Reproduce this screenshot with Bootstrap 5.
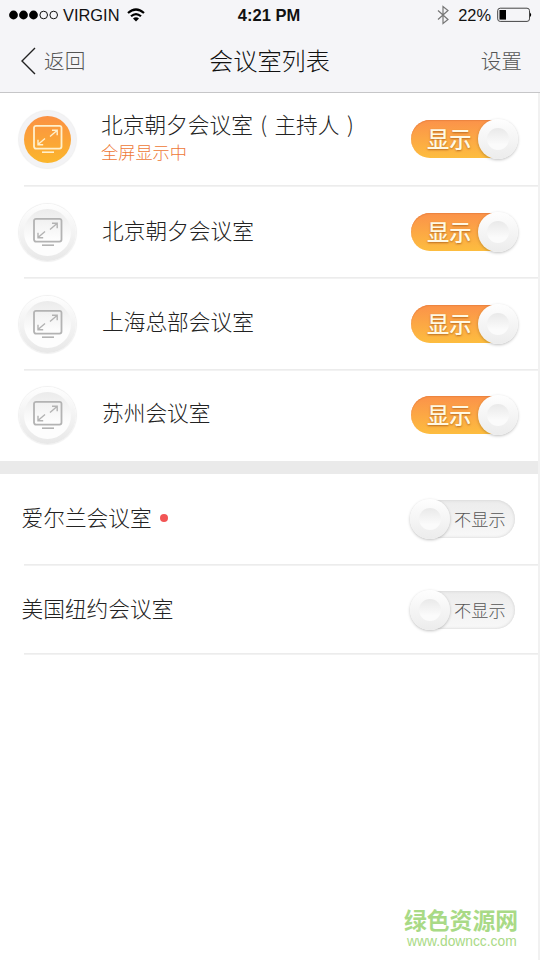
<!DOCTYPE html>
<html lang="zh-CN">
<head>
<meta charset="utf-8">
<meta name="viewport" content="width=device-width, initial-scale=1">
<title>会议室列表</title>
<link href="https://cdn.jsdelivr.net/npm/bootstrap@5.3.0/dist/css/bootstrap.min.css" rel="stylesheet">
<style>
body{font-family:"Noto Sans CJK SC",sans-serif;font-weight:300;color:#222;background:#fff;height:960px;overflow:hidden}
.screen{height:960px}
.top-area{height:93px;background:#f5f5f8;border-bottom:1px solid #c6c6c8}
.status-row{height:30px;font-family:"Liberation Sans",Arial,sans-serif;font-weight:400;font-size:16.4px;line-height:30px;color:#111;padding:0 8px}
.status-row .clock{font-weight:700;font-size:16.5px;margin-right:3px}
.status-row .power{margin-right:-1px}
.status-row>div,.title-row>div{flex:1 1 0}
.title-row{height:61px;line-height:60px;padding:0 18px 0 20px;font-size:20.7px;color:#555}
.title-row h1{font-size:24.2px;font-weight:300;line-height:58px;color:#111;padding:0 3px 2px 0}
.title-row .label{padding-bottom:2px}
.title-row .back-label{padding-left:7px}
.body-area{border-right:2px solid #f1f1f1}
.room{height:90px;padding-left:19px;padding-right:20px}
.room.first{height:92px}
.room.last{height:87px}
.room.raised{padding-bottom:2px}
.rule{height:2px;margin-left:24px;background:linear-gradient(#e9e9e9,#f5f5f5)}
.room-name{font-size:21.7px;line-height:28px;white-space:nowrap;padding-bottom:4px}
.room-name.tall{padding-bottom:6px}
.paren{display:inline-block;width:21.6px;text-align:center}
.with-note .room-name{line-height:27px;padding-bottom:2px;margin-top:-3px}
.room-note{font-size:17.2px;line-height:26px;color:#ee7836}
.band{height:13px;background:#eaeaea}
.disc{width:57px;height:57px;border-radius:50%;background:linear-gradient(#fefefe,#e8e8e8);box-shadow:0 0 1px 1px #f0f0f0;margin-right:26px}
.disc-face{width:47px;height:47px;border-radius:50%;background:linear-gradient(#ebebeb,#fdfdfd 65%);color:#b3b3b3}
.disc.live{background:#f3f3f5;margin-right:25px}
.disc.live .disc-face{background:linear-gradient(#fb9143,#fbb62c);color:#fff0cc}
.toggle{width:107px;height:38px;border-radius:19px;position:relative;border:0;padding:0;font-weight:500;text-align:left}
.toggle .pill{display:block;height:38px;border-radius:19px;line-height:37px}
.toggle .knob{position:absolute;top:-1px;width:40px;height:40px;border-radius:50%;background:linear-gradient(#fefefe,#ececec);box-shadow:0 1px 3px rgba(0,0,0,.25)}
.knob::after{content:"";position:absolute;inset:9px;border-radius:50%;background:linear-gradient(#e9e9e9,#fbfbfb 75%)}
.toggle.on .pill{width:98px;padding-left:16px;font-size:22.3px;color:#fff9e4;background:linear-gradient(#fb924a,#fdbd3f);text-shadow:0 1px 2px #b96d20;box-shadow:inset 0 1px 1px #ec8440}
.toggle.on .knob{right:0}
.toggle.off{width:106px;margin-right:3px;font-weight:300}
.toggle.off .pill{margin-left:8px;padding-left:37px;font-size:17.2px;color:#555;background:linear-gradient(#ececec,#f8f8f8);box-shadow:inset 0 0 3px #ccc}
.toggle.off .knob{left:1px}
.plain{padding-left:21.5px}
.unread{width:8px;height:8px;border-radius:50%;background:#f25555;margin:1px 0 0 8px}
.site-mark{position:absolute;left:404px;top:907px;color:#a9da86}
.site-mark .mark-name{font-size:22.8px;font-weight:700;line-height:26px}
.site-mark .mark-url{font-family:"Liberation Sans",Arial,sans-serif;font-weight:400;font-size:13.8px;line-height:17px;padding-left:3px}
</style>
</head>
<body>
<svg class="d-none" xmlns="http://www.w3.org/2000/svg">
<symbol id="monitor" viewBox="0 0 30 30"><g fill="none" stroke="currentColor"><rect x="1" y="1.8" width="27.5" height="22.8" rx="2" stroke-width="1.8"/><path d="M9 28.2h12" stroke-width="1.6"/><path d="M17 12.5l7-6M19 6.3h5.2v5M12 14.5l-7 6M5 15.7v5h5.2" stroke-width="1.4"/></g></symbol>
</svg>
<div class="screen position-relative d-flex flex-column">
<header class="top-area">
  <div class="status-row d-flex align-items-center">
    <div class="d-flex align-items-center">
      <svg width="51" height="10" viewBox="0 0 51 10"><g fill="#000"><circle cx="5.5" cy="5" r="4.4"/><circle cx="15.5" cy="5" r="4.4"/><circle cx="25.5" cy="5" r="4.4"/></g><g fill="none" stroke="#111"><circle cx="35.7" cy="5" r="3.8"/><circle cx="45.7" cy="5" r="3.8"/></g></svg>
      <span class="ms-1">VIRGIN</span>
      <svg class="ms-2" width="18" height="14" viewBox="0 0 18 14"><g fill="none" stroke="#000" stroke-width="2.2"><path d="M1 5Q9-2 17 5"/><path d="M4 8.3Q9 3.8 14 8.3"/></g><path d="M6 10.4Q9 8 12 10.4L9 13.4Z"/></svg>
    </div>
    <span class="clock">4:21 PM</span>
    <div class="power d-flex align-items-center justify-content-end">
      <svg width="13" height="20" viewBox="0 0 13 20" fill="none" stroke="#777" stroke-width="1.2"><path d="M1 5.5l10 9-5 4V1.5l5 4-10 9"/></svg>
      <span class="ms-1 ps-1 me-1">22%</span>
      <svg width="38" height="16" viewBox="0 0 38 16"><rect x="2.7" y="1.2" width="31.8" height="13.2" rx="2.5" fill="none" stroke="#444"/><path d="M4.5 3h6.5v9.6H4.5Z"/><path d="M35 5.5q2.4 2.3 0 4.6Z"/></svg>
    </div>
  </div>
  <nav class="title-row d-flex align-items-center">
    <div class="d-flex align-items-center">
      <svg width="17" height="28" viewBox="0 0 17 28" fill="none" stroke="#222" stroke-width="1.4"><path d="M15 1L2 14l13 13"/></svg>
      <span class="label back-label">返回</span>
    </div>
    <h1 class="mb-0">会议室列表</h1>
    <div class="label text-end">设置</div>
  </nav>
</header>
<main class="body-area flex-grow-1">
  <section>
    <div class="room first d-flex align-items-center">
      <div class="disc live d-flex align-items-center justify-content-center flex-shrink-0"><div class="disc-face d-flex align-items-center justify-content-center"><svg width="30" height="30"><use href="#monitor"/></svg></div></div>
      <div class="with-note flex-grow-1"><div class="room-name">北京朝夕会议室<span class="paren">(</span>主持人<span class="paren">)</span></div><div class="room-note">全屏显示中</div></div>
      <button class="toggle on bg-transparent"><span class="pill">显示</span><span class="knob"></span></button>
    </div>
    <div class="rule"></div>
    <div class="room d-flex align-items-center">
      <div class="disc d-flex align-items-center justify-content-center flex-shrink-0"><div class="disc-face d-flex align-items-center justify-content-center"><svg width="30" height="30"><use href="#monitor"/></svg></div></div>
      <div class="flex-grow-1 room-name">北京朝夕会议室</div>
      <button class="toggle on bg-transparent"><span class="pill">显示</span><span class="knob"></span></button>
    </div>
    <div class="rule"></div>
    <div class="room d-flex align-items-center">
      <div class="disc d-flex align-items-center justify-content-center flex-shrink-0"><div class="disc-face d-flex align-items-center justify-content-center"><svg width="30" height="30"><use href="#monitor"/></svg></div></div>
      <div class="flex-grow-1 room-name tall">上海总部会议室</div>
      <button class="toggle on bg-transparent"><span class="pill">显示</span><span class="knob"></span></button>
    </div>
    <div class="rule"></div>
    <div class="room raised d-flex align-items-center">
      <div class="disc d-flex align-items-center justify-content-center flex-shrink-0"><div class="disc-face d-flex align-items-center justify-content-center"><svg width="30" height="30"><use href="#monitor"/></svg></div></div>
      <div class="flex-grow-1 room-name tall">苏州会议室</div>
      <button class="toggle on bg-transparent"><span class="pill">显示</span><span class="knob"></span></button>
    </div>
  </section>
  <div class="band"></div>
  <section>
    <div class="room plain d-flex align-items-center">
      <div class="flex-grow-1 room-name d-flex align-items-center">爱尔兰会议室<span class="unread"></span></div>
      <button class="toggle off bg-transparent"><span class="pill">不显示</span><span class="knob"></span></button>
    </div>
    <div class="rule"></div>
    <div class="room last plain d-flex align-items-center">
      <div class="flex-grow-1 room-name">美国纽约会议室</div>
      <button class="toggle off bg-transparent"><span class="pill">不显示</span><span class="knob"></span></button>
    </div>
    <div class="rule"></div>
  </section>
</main>
<footer class="site-mark"><div class="mark-name">绿色资源网</div><div class="mark-url">www.downcc.com</div></footer>
</div>
<script src="https://cdn.jsdelivr.net/npm/bootstrap@5.3.0/dist/js/bootstrap.bundle.min.js"></script>
</body>
</html>
